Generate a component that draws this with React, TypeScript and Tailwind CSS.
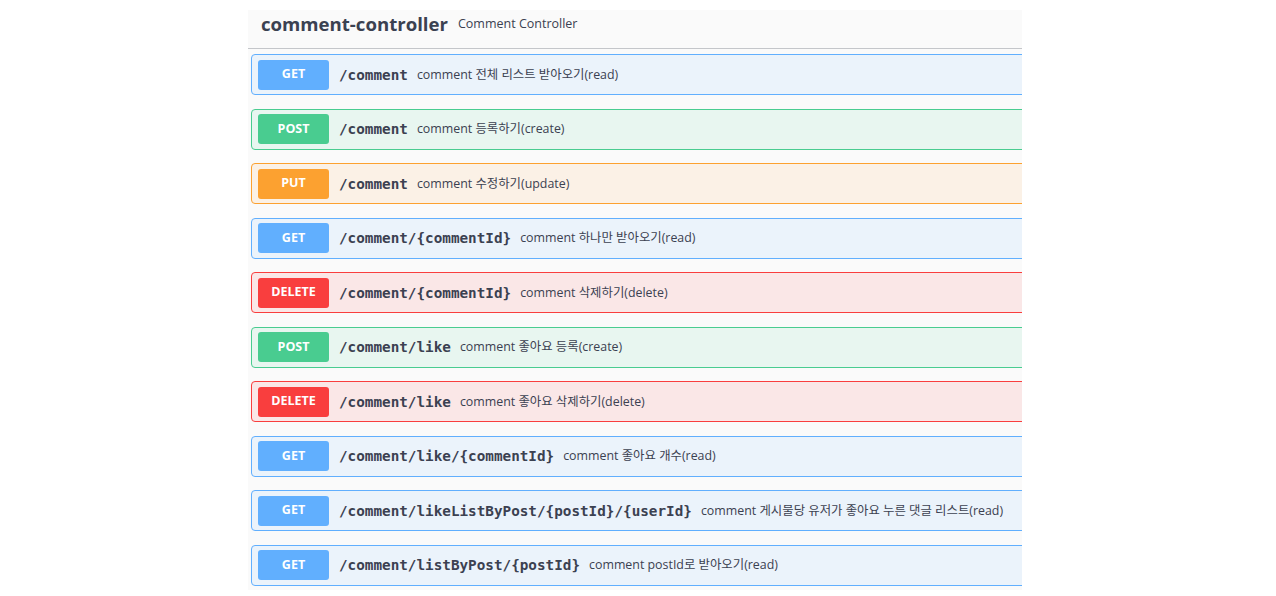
import React from "react";

type Method = "GET" | "POST" | "PUT" | "DELETE";

type Operation = {
  method: Method;
  path: string;
  summary: string;
};

const methodStyles: Record<Method, { block: string; badge: string }> = {
  GET: { block: "border-[#61affe] bg-[#ebf3fb]", badge: "bg-[#61affe]" },
  POST: { block: "border-[#49cc90] bg-[#e8f6f0]", badge: "bg-[#49cc90]" },
  PUT: { block: "border-[#fca130] bg-[#fbf1e6]", badge: "bg-[#fca130]" },
  DELETE: { block: "border-[#f93e3e] bg-[#fae7e7]", badge: "bg-[#f93e3e]" },
};

const operations: Operation[] = [
  { method: "GET", path: "/comment", summary: "comment 전체 리스트 받아오기(read)" },
  { method: "POST", path: "/comment", summary: "comment 등록하기(create)" },
  { method: "PUT", path: "/comment", summary: "comment 수정하기(update)" },
  { method: "GET", path: "/comment/{commentId}", summary: "comment 하나만 받아오기(read)" },
  { method: "DELETE", path: "/comment/{commentId}", summary: "comment 삭제하기(delete)" },
  { method: "POST", path: "/comment/like", summary: "comment 좋아요 등록(create)" },
  { method: "DELETE", path: "/comment/like", summary: "comment 좋아요 삭제하기(delete)" },
  { method: "GET", path: "/comment/like/{commentId}", summary: "comment 좋아요 개수(read)" },
  {
    method: "GET",
    path: "/comment/likeListByPost/{postId}/{userId}",
    summary: "comment 게시물당 유저가 좋아요 누른 댓글 리스트(read)",
  },
  { method: "GET", path: "/comment/listByPost/{postId}", summary: "comment postId로 받아오기(read)" },
];

function OperationRow({ op }: { op: Operation }) {
  const style = methodStyles[op.method];
  return (
    <div
      className={`ml-[3px] flex h-[41px] w-[calc(100%+10px)] items-center rounded-l-[4px] border pl-[6px] ${style.block}`}
    >
      <span
        className={`flex h-[30px] w-[71px] shrink-0 items-center justify-center rounded-[3px] text-[12.5px] font-bold text-white ${style.badge}`}
        style={{ fontFamily: '"Open Sans", "Noto Sans", sans-serif' }}
      >
        {op.method}
      </span>
      <span
        className="ml-[10px] pt-[2px] text-[14.3px] font-bold text-[#3b4151]"
        style={{ fontFamily: '"DejaVu Sans Mono", monospace' }}
      >
        {op.path}
      </span>
      <span
        className="ml-[9px] whitespace-nowrap pt-[1px] text-[12.4px] text-[#3b4151]"
        style={{ fontFamily: '"Open Sans", "Noto Sans CJK KR", sans-serif' }}
      >
        {op.summary}
      </span>
    </div>
  );
}

export default function App() {
  return (
    <div className="min-h-[596px] bg-white pt-[10px]">
      <div className="ml-[248px] h-[580px] w-[774px] overflow-hidden bg-[#fafafa]">
        <div className="flex h-[39px] items-center border-b border-[#c4c6ca] pb-[10px] pl-[13px]">
          <h3
            className="text-[18.6px] font-bold text-[#3b4151]"
            style={{ fontFamily: '"Open Sans", "Noto Sans", sans-serif' }}
          >
            comment-controller
          </h3>
          <span
            className="ml-[10px] text-[12.5px] text-[#3b4151]"
            style={{ fontFamily: '"Open Sans", "Noto Sans", sans-serif' }}
          >
            Comment Controller
          </span>
        </div>
        <div className="mt-[5px] flex flex-col gap-[13.5px]">
          {operations.map((op, i) => (
            <OperationRow key={i} op={op} />
          ))}
        </div>
      </div>
    </div>
  );
}
